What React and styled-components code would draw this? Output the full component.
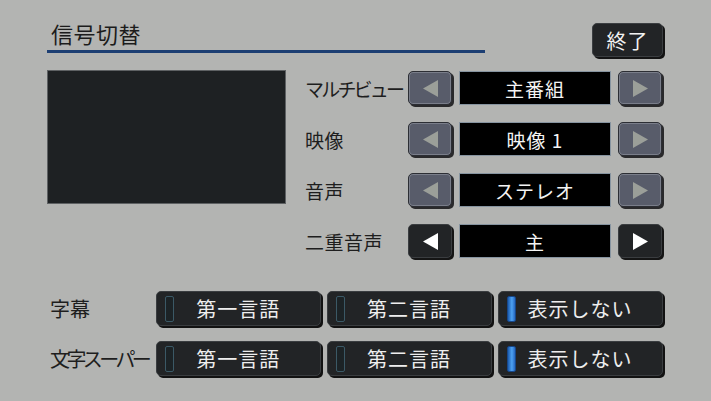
import React from "react";
import styled, { createGlobalStyle } from "styled-components";

const Global = createGlobalStyle`
  html, body { margin: 0; padding: 0; }
  body {
    background: #b3b4b2;
    font-family: "Noto Sans CJK JP", "Noto Sans", sans-serif;
  }
`;

const Page = styled.div`
  width: 711px;
  height: 401px;
  box-sizing: border-box;
  padding: 20px 48px 0 47px;
  background: #b3b4b2;
  overflow: hidden;
`;

const Header = styled.div`
  display: flex;
  align-items: flex-start;
`;

const Title = styled.h1`
  margin: 0;
  width: 438px;
  box-sizing: border-box;
  padding: 0 0 4px 4px;
  font-size: 22px;
  line-height: 26px;
  font-weight: 400;
  color: #1c1c1c;
  border-bottom: 3px solid #1d3f73;
  letter-spacing: 0.5px;
`;

const EndButton = styled.button`
  margin: 3px 0 0 auto;
  width: 71px;
  height: 34px;
  padding: 0;
  background: #222426;
  color: #f2f2f2;
  font-family: inherit;
  font-size: 20px;
  border: 1px solid #3b3e41;
  border-radius: 5px;
  box-shadow: 2px 2px 0 #141414;
  letter-spacing: 1px;
`;

const Main = styled.div`
  display: flex;
  align-items: flex-start;
  margin-top: 13px;
`;

const Preview = styled.div`
  width: 239px;
  height: 134px;
  box-sizing: border-box;
  background: #1e2123;
  border: 1px solid #5e6163;
`;

const Settings = styled.div`
  display: flex;
  flex-direction: column;
  gap: 17px;
  margin-left: 19px;
  padding-top: 1px;
`;

const Row = styled.div`
  display: flex;
  align-items: center;
  height: 34px;
`;

const RowLabel = styled.div`
  width: 103px;
  font-size: 19px;
  color: #1e1e1e;
  white-space: nowrap;
  letter-spacing: ${(p) => p.$spacing};
`;

const ArrowButton = styled.button`
  width: 44px;
  height: 34px;
  padding: 0;
  display: flex;
  align-items: center;
  justify-content: center;
  border-radius: 5px;
  border: 1px solid ${(p) => (p.$active ? "#3a3d40" : "#2c2e34")};
  background: ${(p) => (p.$active ? "#222426" : "#585c6a")};
  box-shadow: ${(p) =>
    p.$active
      ? "2px 2px 0 #151515"
      : "inset 0 0 0 1px #7a7e8a, 2px 2px 0 #2a2a2c"};
`;

const ValueBox = styled.div`
  width: 152px;
  height: 34px;
  box-sizing: border-box;
  margin: 0 7px;
  background: #000;
  border: 1px solid #8794a0;
  color: #f4f4f4;
  font-size: 19px;
  display: flex;
  align-items: center;
  justify-content: center;
  letter-spacing: 1px;
`;

const Triangle = ({ dir, color }) => (
  <svg width="15" height="17" viewBox="0 0 15 17">
    {dir === "left" ? (
      <polygon points="15,0 15,17 0,8.5" fill={color} />
    ) : (
      <polygon points="0,0 0,17 15,8.5" fill={color} />
    )}
  </svg>
);

const Bottom = styled.div`
  display: flex;
  flex-direction: column;
  gap: 15px;
  margin-top: 33px;
`;

const OptionRow = styled.div`
  display: flex;
  align-items: center;
  gap: 6px;
  height: 35px;
`;

const OptionLabel = styled.div`
  width: 101px;
  padding-left: 3px;
  font-size: 20px;
  color: #1e1e1e;
  white-space: nowrap;
  letter-spacing: ${(p) => p.$spacing};
`;

const OptionButton = styled.button`
  width: 166px;
  height: 35px;
  padding: 0 18px 0 8px;
  display: flex;
  align-items: center;
  background: #222426;
  border: 1px solid #3a3d40;
  border-radius: 5px;
  box-shadow: 2px 2px 0 #121212;
  font-family: inherit;
  color: #eeeeee;
  font-size: 20px;
`;

const Indicator = styled.span`
  width: 9px;
  height: 26px;
  box-sizing: border-box;
  border-radius: 2px;
  border: 1px solid ${(p) => (p.$on ? "#17478a" : "#3b5966")};
  background: ${(p) =>
    p.$on
      ? "linear-gradient(to right, #1b5cb0, #4ea2f2 55%, #2467c0)"
      : "#1c2326"};
`;

const OptionText = styled.span`
  flex: 1;
  text-align: center;
  letter-spacing: 1px;
`;

const settings = [
  { label: "マルチビュー", value: "主番組", active: false, spacing: "-2.8px" },
  { label: "映像", value: "映像 1", active: false, spacing: "0.5px" },
  { label: "音声", value: "ステレオ", active: false, spacing: "0.5px" },
  { label: "二重音声", value: "主", active: true, spacing: "0.5px" },
];

const options = ["第一言語", "第二言語", "表示しない"];
const optionRows = [
  { label: "字幕", spacing: "0px" },
  { label: "文字スーパー", spacing: "-3.6px" },
];

export default function App() {
  return (
    <>
      <Global />
      <Page>
        <Header>
          <Title>信号切替</Title>
          <EndButton>終了</EndButton>
        </Header>
        <Main>
          <Preview />
          <Settings>
            {settings.map((s) => {
              const c = s.active ? "#ffffff" : "#9b9f99";
              return (
                <Row key={s.label}>
                  <RowLabel $spacing={s.spacing}>{s.label}</RowLabel>
                  <ArrowButton $active={s.active}>
                    <Triangle dir="left" color={c} />
                  </ArrowButton>
                  <ValueBox>{s.value}</ValueBox>
                  <ArrowButton $active={s.active}>
                    <Triangle dir="right" color={c} />
                  </ArrowButton>
                </Row>
              );
            })}
          </Settings>
        </Main>
        <Bottom>
          {optionRows.map((r) => (
            <OptionRow key={r.label}>
              <OptionLabel $spacing={r.spacing}>{r.label}</OptionLabel>
              {options.map((o, i) => (
                <OptionButton key={o}>
                  <Indicator $on={i === 2} />
                  <OptionText>{o}</OptionText>
                </OptionButton>
              ))}
            </OptionRow>
          ))}
        </Bottom>
      </Page>
    </>
  );
}
